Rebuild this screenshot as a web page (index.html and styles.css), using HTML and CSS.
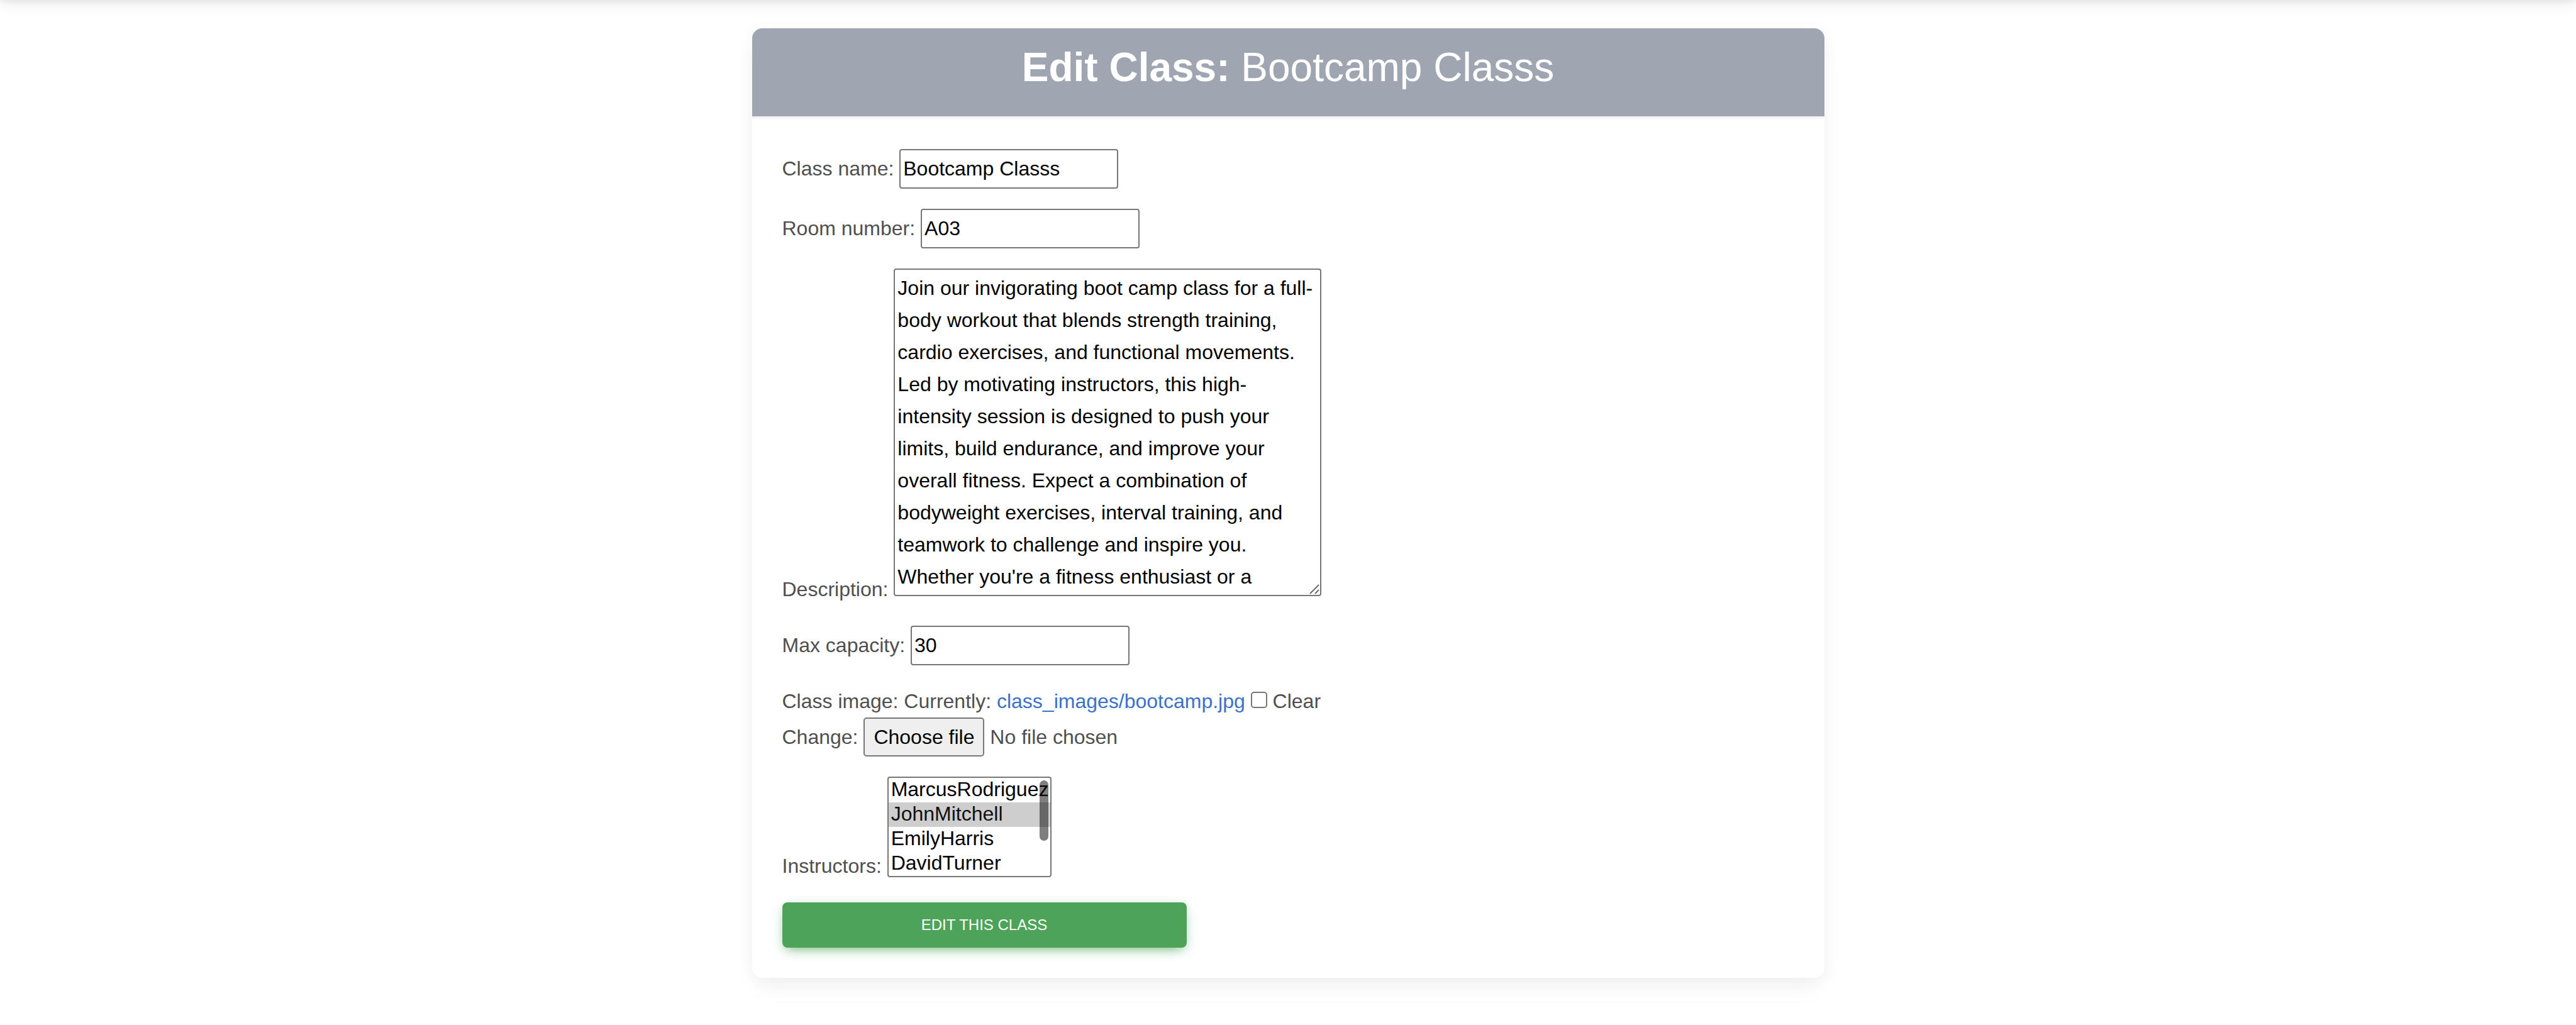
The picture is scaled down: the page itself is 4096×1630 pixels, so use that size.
FILE: index.html
```html
<!DOCTYPE html>
<html lang="en">
<head>
<meta charset="utf-8">
<title>Edit Class</title>
<link rel="stylesheet" href="styles.css">
</head>
<body>
<header class="navbar"></header>
<main class="card">
  <div class="card-header">
    <h2 class="card-title"><strong>Edit Class:</strong> Bootcamp Classs</h2>
  </div>
  <form class="card-body">
    <p class="field">
      <label for="id_name">Class name:</label>
      <input class="control" type="text" id="id_name" value="Bootcamp Classs">
    </p>
    <p class="field">
      <label for="id_room">Room number:</label>
      <input class="control" type="text" id="id_room" value="A03">
    </p>
    <p class="field">
      <label for="id_description">Description:</label>
      <span class="description-wrap">
        <textarea class="control description" id="id_description">Join our invigorating boot camp class for a full-body workout that blends strength training, cardio exercises, and functional movements. Led by motivating instructors, this high-intensity session is designed to push your limits, build endurance, and improve your overall fitness. Expect a combination of bodyweight exercises, interval training, and teamwork to challenge and inspire you. Whether you're a fitness enthusiast or a</textarea>
        <svg class="grip" viewBox="0 0 16 16" aria-hidden="true"><path d="M1 15 15 1M9 15l6-6"/></svg>
      </span>
    </p>
    <p class="field">
      <label for="id_capacity">Max capacity:</label>
      <input class="control" type="text" inputmode="numeric" id="id_capacity" value="30">
    </p>
    <p class="field">
      <label for="id_image">Class image:</label>
      Currently: <a class="link" href="#">class_images/bootcamp.jpg</a>
      <input class="checkbox" type="checkbox" id="id_clear">
      <label for="id_clear">Clear</label><br>
      Change:
      <input class="file-input" type="file" id="id_image" tabindex="-1">
      <button class="file-button" type="button" onclick="document.getElementById('id_image').click()">Choose file</button>
      No file chosen
    </p>
    <p class="field">
      <label for="id_instructors">Instructors:</label>
      <span class="listbox-wrap">
        <select class="listbox" id="id_instructors" multiple size="4">
          <option>MarcusRodriguez</option>
          <option selected>JohnMitchell</option>
          <option>EmilyHarris</option>
          <option>DavidTurner</option>
        </select>
        <span class="scroll-thumb"></span>
      </span>
    </p>
    <button class="submit" type="submit">Edit this class</button>
  </form>
</main>
</body>
</html>
```
FILE: styles.css
```css
*,
*::before,
*::after {
  box-sizing: border-box;
}

body {
  display: flex;
  flex-direction: column;
  align-items: center;
  min-height: 100vh;
  margin: 0;
  background: #fff;
  color: #4f4f4f;
  font-family: "Liberation Sans", Arial, sans-serif;
  font-size: 32px;
  line-height: 51px;
}

/* The bar itself sits above the fold; only its shadow shows. */
.navbar {
  flex: none;
  width: 100%;
  height: 64px;
  margin-top: -64px;
  box-shadow: 0 8px 24px rgba(0, 0, 0, 0.07), 0 4px 8px rgba(0, 0, 0, 0.05);
}

.card {
  width: 100%;
  max-width: 1705px;
  margin: 45px 0 64px;
  border-radius: 16px;
  background: #fff;
  box-shadow: 0 4px 30px -6px rgba(0, 0, 0, 0.07), 0 20px 40px -4px rgba(0, 0, 0, 0.04);
}

.card-header {
  padding: 24px 48px;
  border-bottom: 4px solid #f5f5f5;
  border-radius: 16px 16px 0 0;
  background: #9fa6b2;
  background-clip: padding-box;
  color: #fff;
  text-align: center;
}

.card-title {
  margin: 0 0 16px;
  font-size: 64px;
  font-weight: 400;
  line-height: 76px;
}

.card-body {
  padding: 48px;
}

.field {
  margin: 0 0 32px;
}

.control {
  width: 348px;
  margin: 0;
  padding: 4px;
  border: 2px solid #767676;
  border-radius: 4px;
  background: #fff;
  color: #000;
  font: inherit;
}

input.control {
  height: 63px;
}

.description-wrap {
  display: inline-block;
  position: relative;
  overflow: hidden;
}

.description {
  display: block;
  width: 680px;
  height: 521px;
  overflow: hidden;
  resize: none;
}

.grip {
  position: absolute;
  right: 3px;
  bottom: 3px;
  width: 16px;
  height: 16px;
  fill: none;
  stroke: #6b6b6b;
  stroke-width: 2;
}

.link {
  color: #3b71ca;
  text-decoration: none;
}

.checkbox {
  appearance: none;
  width: 26px;
  height: 26px;
  margin: 0;
  border: 2px solid #767676;
  border-radius: 5px;
  background: #fff;
  vertical-align: baseline;
}

.file-input {
  position: absolute;
  width: 1px;
  height: 1px;
  overflow: hidden;
  opacity: 0;
}

.file-button {
  height: 62px;
  margin: 0;
  padding: 4px 14px;
  border: 2px solid #767676;
  border-radius: 5px;
  background: #efefef;
  color: #000;
  font: inherit;
}

.listbox-wrap {
  display: inline-block;
  position: relative;
  overflow: hidden;
  vertical-align: -7px;
}

.listbox {
  display: block;
  width: 261px;
  height: 160px;
  margin: 0;
  padding: 0;
  border: 2px solid #767676;
  border-radius: 4px;
  background: #fff;
  color: #000;
  font: inherit;
  line-height: 37px;
  overflow: hidden;
  scrollbar-width: none;
}

.listbox option {
  height: 39px;
  min-height: 39px;
  padding: 0 4px 2px;
}

.scroll-thumb {
  position: absolute;
  top: 6px;
  right: 5px;
  width: 14px;
  height: 96px;
  border-radius: 7px;
  background: rgba(0, 0, 0, 0.5);
  pointer-events: none;
}

.submit {
  display: block;
  width: 643px;
  height: 72px;
  margin: 0;
  padding: 0;
  border: 0;
  border-radius: 8px;
  background: #4da358;
  box-shadow: 0 8px 18px -8px rgba(77, 163, 88, 0.8), 0 4px 20px rgba(77, 163, 88, 0.2);
  color: #fff;
  font-family: inherit;
  font-size: 24px;
  line-height: 36px;
  text-transform: uppercase;
}
```
